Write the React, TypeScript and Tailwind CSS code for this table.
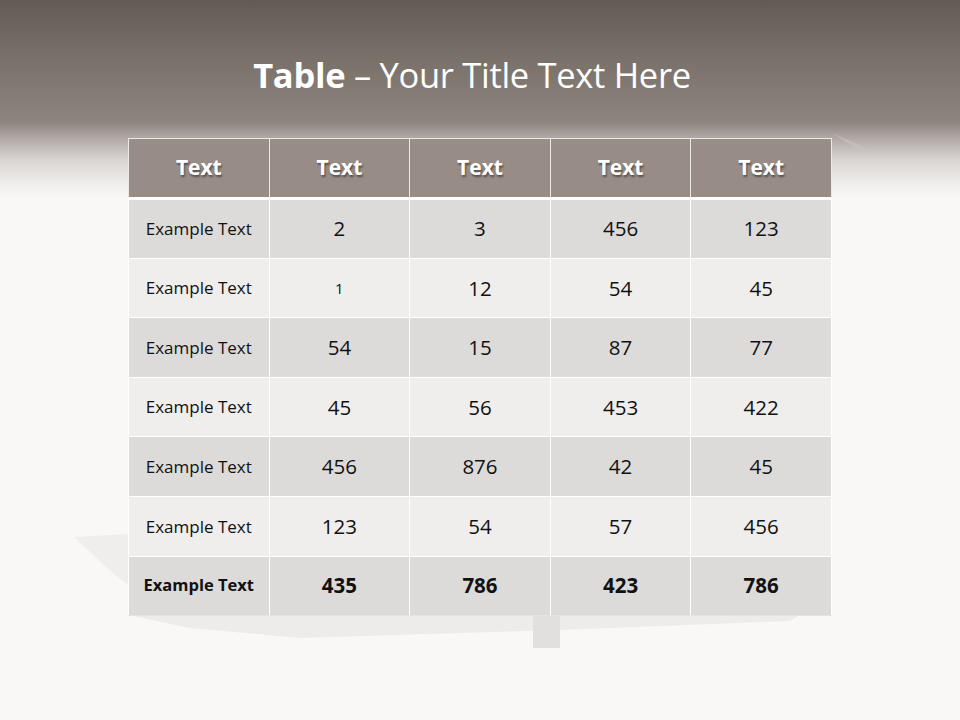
const HEAD = ["Text", "Text", "Text", "Text", "Text"];

const ROWS: string[][] = [
  ["Example Text", "2", "3", "456", "123"],
  ["Example Text", "1", "12", "54", "45"],
  ["Example Text", "54", "15", "87", "77"],
  ["Example Text", "45", "56", "453", "422"],
  ["Example Text", "456", "876", "42", "45"],
  ["Example Text", "123", "54", "57", "456"],
];

const TOTAL = ["Example Text", "435", "786", "423", "786"];

function Backdrop() {
  // faint box shadow shapes lying behind the table
  return (
    <svg className="absolute inset-0" width="960" height="720" viewBox="0 0 960 720" aria-hidden="true">
      <polygon points="74,537 128,534 128,585 115,575" fill="#f0eeed" />
      <polygon points="128,615 800,615 790,621 560,630 300,638 190,628" fill="#eeeceb" />
      <rect x="533" y="615" width="27" height="33" fill="#e2e0df" />
      <polygon points="832,133 860,145 870,153 862,152" fill="#c9c3c0" opacity="0.6" />
    </svg>
  );
}

export default function App() {
  return (
    <div className="relative w-[960px] h-[720px] overflow-hidden bg-[linear-gradient(180deg,#625a55_0px,#7a716b_60px,#8e847e_122px,#aaa29e_135px,#d9d5d3_160px,#f1efee_185px,#f9f8f7_200px,#f9f8f7_100%)] font-['Open_Sans',sans-serif]">
      <Backdrop />
      <div className="relative flex flex-col items-center">
        <h1 className="mt-[53px] mr-[16px] h-[44px] text-[34.5px] leading-[44px] text-white tracking-[-0.3px]">
          <span className="font-bold">Table</span> – Your Title Text Here
        </h1>
        <table className="mt-[41px] w-[704px] border-collapse table-fixed">
          <thead>
            <tr className="h-[60px] bg-[#978c86]">
              {HEAD.map((h, i) => (
                <th
                  key={i}
                  className="border border-[#ece8e6] border-b-[3px] border-b-white text-[21px] font-bold text-white [text-shadow:1px_2px_2px_rgba(0,0,0,0.45)]"
                >
                  {h}
                </th>
              ))}
            </tr>
          </thead>
          <tbody>
            {ROWS.map((row, r) => (
              <tr key={r} className={r % 2 === 0 ? "h-[59.6px] bg-[#dcdbda]" : "h-[59.6px] bg-[#efeeed]"}>
                {row.map((c, i) => (
                  <td
                    key={i}
                    className={
                      i === 0
                        ? "border border-white text-center text-[17px] text-[#111]"
                        : c === "1"
                        ? "border border-white text-center text-[15px] text-[#111]"
                        : "border border-white text-center text-[20.5px] text-[#111]"
                    }
                  >
                    {c}
                  </td>
                ))}
              </tr>
            ))}
            <tr className="h-[59.6px] bg-[#dcdbda]">
              {TOTAL.map((c, i) => (
                <td
                  key={i}
                  className={
                    i === 0
                      ? "border border-white border-b-[#e6e4e3] text-center text-[16.5px] font-bold text-[#111]"
                      : "border border-white border-b-[#e6e4e3] text-center text-[20.5px] font-bold text-[#111]"
                  }
                >
                  {c}
                </td>
              ))}
            </tr>
          </tbody>
        </table>
      </div>
    </div>
  );
}
